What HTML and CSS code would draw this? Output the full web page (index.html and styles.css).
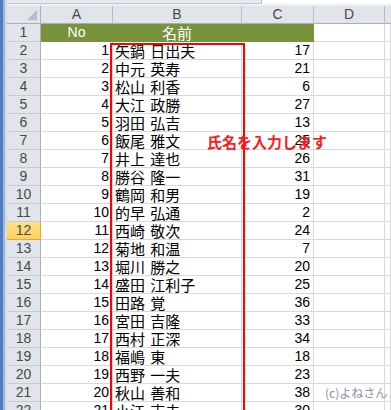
FILE: index.html
```html
<!DOCTYPE html>
<html lang="ja">
<head>
<meta charset="utf-8">
<title>名簿</title>
<link rel="stylesheet" href="styles.css">
</head>
<body>
<div class="window">
  <div class="frame"></div>
  <div class="pane">
    <div class="toolbar-edge"><div class="edge-tab"></div></div>
    <div class="sheet">
      <div class="corner"><svg width="10" height="10" viewBox="0 0 10 10"><polygon points="10,0 10,10 0,10" fill="#b4bcc6"/></svg></div>
      <div class="colhead">A</div><div class="colhead">B</div><div class="colhead">C</div><div class="colhead">D</div><div class="colhead edge"></div>

      <div class="rowhead">1</div><div class="cell title">No</div><div class="cell title jp">名前</div><div class="cell title"></div><div class="cell"></div><div class="cell"></div>
      <div class="rowhead">2</div><div class="cell num">1</div><div class="cell name">矢鍋 日出夫</div><div class="cell num">17</div><div class="cell"></div><div class="cell"></div>
      <div class="rowhead">3</div><div class="cell num">2</div><div class="cell name">中元 英寿</div><div class="cell num">21</div><div class="cell"></div><div class="cell"></div>
      <div class="rowhead">4</div><div class="cell num">3</div><div class="cell name">松山 利香</div><div class="cell num">6</div><div class="cell"></div><div class="cell"></div>
      <div class="rowhead">5</div><div class="cell num">4</div><div class="cell name">大江 政勝</div><div class="cell num">27</div><div class="cell"></div><div class="cell"></div>
      <div class="rowhead">6</div><div class="cell num">5</div><div class="cell name">羽田 弘吉</div><div class="cell num">13</div><div class="cell"></div><div class="cell"></div>
      <div class="rowhead">7</div><div class="cell num">6</div><div class="cell name">飯尾 雅文</div><div class="cell num">25</div><div class="cell"></div><div class="cell"></div>
      <div class="rowhead">8</div><div class="cell num">7</div><div class="cell name">井上 達也</div><div class="cell num">26</div><div class="cell"></div><div class="cell"></div>
      <div class="rowhead">9</div><div class="cell num">8</div><div class="cell name">勝谷 隆一</div><div class="cell num">31</div><div class="cell"></div><div class="cell"></div>
      <div class="rowhead">10</div><div class="cell num">9</div><div class="cell name">鶴岡 和男</div><div class="cell num">19</div><div class="cell"></div><div class="cell"></div>
      <div class="rowhead">11</div><div class="cell num">10</div><div class="cell name">的早 弘通</div><div class="cell num">2</div><div class="cell"></div><div class="cell"></div>
      <div class="rowhead active">12</div><div class="cell num">11</div><div class="cell name">西崎 敬次</div><div class="cell num">24</div><div class="cell"></div><div class="cell"></div>
      <div class="rowhead">13</div><div class="cell num">12</div><div class="cell name">菊地 和温</div><div class="cell num">7</div><div class="cell"></div><div class="cell"></div>
      <div class="rowhead">14</div><div class="cell num">13</div><div class="cell name">堀川 勝之</div><div class="cell num">20</div><div class="cell"></div><div class="cell"></div>
      <div class="rowhead">15</div><div class="cell num">14</div><div class="cell name">盛田 江利子</div><div class="cell num">25</div><div class="cell"></div><div class="cell"></div>
      <div class="rowhead">16</div><div class="cell num">15</div><div class="cell name">田路 覚</div><div class="cell num">36</div><div class="cell"></div><div class="cell"></div>
      <div class="rowhead">17</div><div class="cell num">16</div><div class="cell name">宮田 吉隆</div><div class="cell num">33</div><div class="cell"></div><div class="cell"></div>
      <div class="rowhead">18</div><div class="cell num">17</div><div class="cell name">西村 正深</div><div class="cell num">34</div><div class="cell"></div><div class="cell"></div>
      <div class="rowhead">19</div><div class="cell num">18</div><div class="cell name">福嶋 東</div><div class="cell num">18</div><div class="cell"></div><div class="cell"></div>
      <div class="rowhead">20</div><div class="cell num">19</div><div class="cell name">西野 一夫</div><div class="cell num">23</div><div class="cell"></div><div class="cell"></div>
      <div class="rowhead">21</div><div class="cell num">20</div><div class="cell name">秋山 善和</div><div class="cell num">38</div><div class="cell"></div><div class="cell"></div>
      <div class="rowhead">22</div><div class="cell num">21</div><div class="cell name">小江 吉夫</div><div class="cell num">30</div><div class="cell"></div><div class="cell"></div>
    </div>
  </div>
  <div class="name-range"></div>
  <p class="callout">氏名を入力します</p>
  <p class="credit">(c)よねさん</p>
</div>
</body>
</html>
```

FILE: styles.css
```css
* { box-sizing: border-box; }

html, body {
  margin: 0;
  padding: 0;
  background: #ffffff;
}

.window {
  position: relative;
  width: 391px;
  height: 410px;
  overflow: hidden;
  display: flex;
  font-family: "Liberation Sans", "Noto Sans CJK JP", sans-serif;
  font-size: 14px;
  color: #000;
}

/* blue window frame on the left */
.frame {
  width: 7px;
  flex: none;
  background: linear-gradient(to right, #4f7dc2 0, #4f7dc2 3px, #9db6dd 3px, #9db6dd 5px, #d6dce5 5px);
}

.pane {
  flex: 1;
  display: flex;
  flex-direction: column;
  min-width: 0;
}

.toolbar-edge {
  height: 7px;
  flex: none;
  background: #ffffff;
  border-bottom: 1px solid #a3aab3;
  box-shadow: inset 0 -2px 0 #eef0f3;
}

.edge-tab {
  width: 255px;
  height: 4px;
  background: #e6e9ed;
  border-right: 1px solid #b6bcc4;
  border-bottom: 1px solid #c3c8cf;
}

.sheet {
  display: grid;
  grid-template-columns: 34px 72px 129px 72px 71px 1fr;
  grid-auto-rows: 18px;
  margin-top: -1px;
}

.corner,
.colhead,
.rowhead {
  background: #e1e4e9;
  color: #444a52;
  font-size: 14px;
  line-height: 17px;
  text-align: center;
}

.corner {
  border-right: 1px solid #a9afb7;
  border-bottom: 1px solid #a9afb7;
  display: flex;
  align-items: flex-end;
  justify-content: flex-end;
  padding: 0 3px 3px 0;
}

.colhead {
  border-right: 1px solid #b9bec6;
  border-bottom: 1px solid #a9afb7;
}

.colhead.edge { border-right: none; }

.rowhead {
  border-right: 1px solid #a9afb7;
  border-bottom: 1px solid #c8ccd2;
}

.rowhead.active {
  background: linear-gradient(#ffe08a, #ffd35a);
  border-bottom-color: #e8a93a;
  border-right-color: #e8a93a;
}

.cell {
  border-right: 1px solid #d9d9d9;
  border-bottom: 1px solid #d9d9d9;
  line-height: 17px;
  white-space: nowrap;
}

.cell.title {
  background: #77933c;
  border-color: #77933c;
  color: #ffffff;
  text-align: center;
  font-size: 14px;
}

.cell.title.jp {
  font-family: "Noto Sans CJK JP", sans-serif;
  font-size: 15px;
}

.cell.num {
  text-align: right;
  padding-right: 3px;
}

.cell.name {
  font-family: "Noto Sans CJK JP", sans-serif;
  font-size: 15px;
  padding-left: 2px;
  word-spacing: 2px;
}

/* red outline around the name column */
.name-range {
  position: absolute;
  left: 110px;
  top: 43px;
  width: 135px;
  height: 400px;
  border: 2px solid #ff0000;
}

.callout {
  position: absolute;
  left: 207px;
  top: 133px;
  margin: 0;
  font-family: "Noto Sans CJK JP", sans-serif;
  font-size: 15px;
  font-weight: 700;
  line-height: 18px;
  color: #ff1a1a;
  white-space: nowrap;
}

.credit {
  position: absolute;
  left: 325px;
  top: 385px;
  margin: 0;
  font-family: "Noto Sans CJK JP", sans-serif;
  font-size: 12px;
  line-height: 16px;
  color: #8791a2;
  white-space: nowrap;
}
```
